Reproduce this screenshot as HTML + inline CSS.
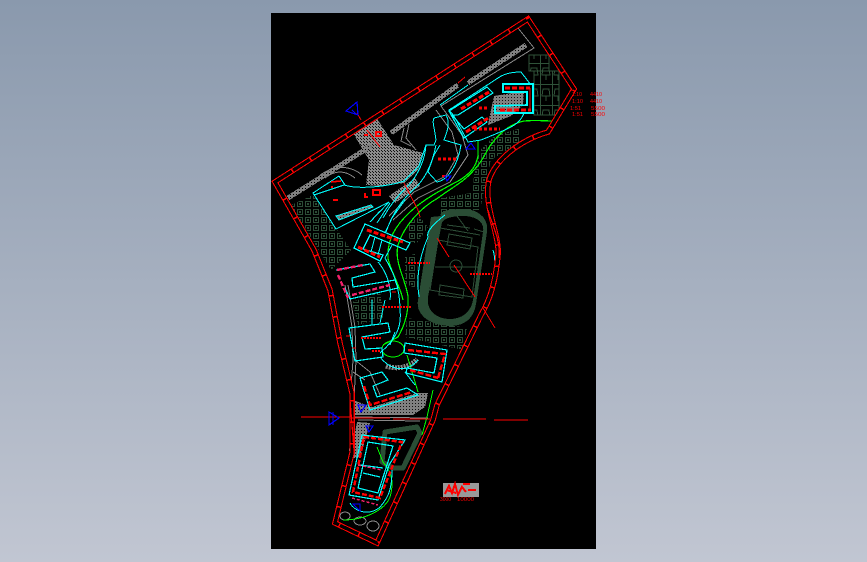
<!DOCTYPE html>
<html><head><meta charset="utf-8"><title>CAD site plan</title>
<style>
html,body{margin:0;padding:0;width:867px;height:562px;overflow:hidden;background:linear-gradient(#8a99ad,#c1c6d2)}
svg{position:absolute;left:0;top:0;display:block}
text{font-family:"Liberation Sans",sans-serif;fill:#f00;font-size:5.5px}
</style></head><body>
<svg width="867" height="562" viewBox="0 0 867 562" xmlns="http://www.w3.org/2000/svg" shape-rendering="crispEdges">
<defs>
<pattern id="g" width="3" height="3" patternUnits="userSpaceOnUse"><rect width="3" height="3" fill="#808080"/><rect x="1" y="1" width="1" height="1" fill="#111"/></pattern>
<pattern id="h" width="3" height="3" patternUnits="userSpaceOnUse"><rect width="3" height="3" fill="#8a8a8a"/><rect x="0" y="0" width="1" height="1" fill="#111"/><rect x="1" y="1" width="1" height="1" fill="#111"/></pattern>
<pattern id="s" width="3" height="3" patternUnits="userSpaceOnUse"><rect width="3" height="3" fill="#808080"/><rect x="2" y="2" width="1" height="1" fill="#000"/></pattern>
<pattern id="t" width="8" height="8" patternUnits="userSpaceOnUse"><rect width="8" height="8" fill="#000"/><rect x="1" y="1" width="6" height="1" fill="#2c4c36"/><rect x="1" y="6" width="6" height="1" fill="#2c4c36"/><rect x="1" y="2" width="1" height="4" fill="#2c4c36"/><rect x="6" y="2" width="1" height="4" fill="#2c4c36"/><rect x="3" y="3" width="2" height="2" fill="#2c4c36"/></pattern>
<pattern id="p" width="12" height="21" patternUnits="userSpaceOnUse"><rect width="12" height="21" fill="#000"/><path d="M.5 0V21M0 .5H12M3 5h6l1 7h-8zM6 12v5" fill="none" stroke="#2f5239"/></pattern>
</defs>
<rect x="271" y="13" width="325" height="536" fill="#000"/>

<!-- hatched ground -->
<g stroke="none">
<path fill="url(#g)" d="M494 96L524 91L523 105L511 116L488 125L491 110Z"/>
<path fill="url(#h)" d="M353 133L376 117L394 145L423 153L418 170L404 183L381 186L366 185L369 160Z"/>
<path fill="url(#h)" d="M389 196L415 178L420 186L395 203Z"/>
<path fill="url(#g)" d="M353 400L372 407L417 393L428 393L425 407L413 415L353 415Z"/>
<path fill="url(#g)" d="M357 422L370 423L360 458L350 458Z"/>
<path fill="url(#g)" d="M336 216L371 205L373 207L339 220Z"/>
</g>

<!-- dark green planting -->
<g stroke="#2f5239" stroke-width="1">
<path fill="url(#p)" d="M529 55H549V71H529Z"/>
<path fill="url(#p)" d="M534 71H559V115H534Z"/>
<path fill="url(#t)" stroke="none" d="M494 136L521 128L519 143L491 160L488 173L480 210L471 210L474 175L480 150Z"/>
<path fill="url(#t)" stroke="none" d="M441 198L471 193L474 213L441 213Z"/>
<path fill="url(#t)" stroke="none" d="M407 223L420 217L428 227L417 243L410 243Z"/>
<path fill="url(#t)" stroke="none" d="M405 257L417 253L418 290L405 283Z"/>
<path fill="url(#t)" stroke="none" d="M407 318L467 328L463 350L405 337Z"/>
<path fill="url(#t)" stroke="none" d="M291 205L313 195L351 250L331 270Z"/>
<path fill="url(#t)" stroke="none" d="M352 302L380 292L385 317L358 325Z"/>
</g>

<!-- running track -->
<path fill="#2a4d35" fill-rule="evenodd" d="M431 217L418 300C415 318 435 326 450 326C465 326 474 318 476 304L487 232C489 218 478 209 463 209C450 209 438 211 441 216ZM442 222L428 297C426 312 438 319 450 319C462 319 471 312 473 300L483 232C485 222 476 216 463 216C452 216 445 218 442 222Z"/>
<g fill="none" stroke="#2c4c36">
<path d="M440 228L480 235M438 240L478 247L472 297L430 290ZM449 234L472 238L470 249L447 245ZM435 267H478M440 285L464 289L463 298L439 295Z"/>
<circle cx="456" cy="266" r="6"/>
<path d="M447 225L470 228M454 212L468 231M418 308H427V315"/>
<path d="M474 229L484 232"/>
</g>
<ellipse cx="393" cy="349" rx="11" ry="8" fill="none" stroke="#0f0"/>

<!-- bottom small track -->
<path d="M385 432L417 427L420 433L403 468L393 468L382 462Z" fill="none" stroke="#2a4d35" stroke-width="5" stroke-linejoin="round"/>

<!-- grey roads -->
<path fill="none" stroke="url(#s)" stroke-width="5" d="M288 198L371 146M391 133L458 85M468 83L526 45"/>
<g fill="none" stroke="#888">
<path d="M518 28L534 48L441 106L462 135L468 155L450 182L418 198L393 220M436 110L452 132L458 155L446 176L414 192L389 216"/>
<path d="M404 128L401 141L411 146M409 124L406 138L416 150"/>
<path d="M345 285L352 327L353 360L350 400M348 285L355 327L356 360L354 400"/>
<path d="M355 360L370 372L380 395M353 372L365 380"/>
<path d="M354 417L428 418M358 420L420 421"/>
<path d="M350 451L353 420" stroke-width="2"/>
<path d="M440 395L433 420L403 480" stroke-width="1"/>
<path d="M352 395L352 412" stroke-width="1"/>
<ellipse cx="345" cy="516" rx="5" ry="4"/>
<ellipse cx="360" cy="521" rx="6" ry="4"/>
<ellipse cx="373" cy="526" rx="6" ry="5"/>
<path d="M355 178C345 170 335 170 325 178M362 175C350 165 335 165 320 175"/>
</g>
<path d="M386 366C397 370 411 367 417 359" fill="none" stroke="#888" stroke-width="5" stroke-dasharray="2 1"/>

<!-- green paths -->
<g fill="none" stroke="#0f0">
<path stroke-width="1.2" d="M556 121C545 121 535 120 524 121C510 124 500 133 493 142C486 150 484 160 474 170C464 182 451 188 438 198C420 208 404 226 398 245C394 262 405 278 408 296C409 315 403 328 398 337L383 345"/>
<path stroke-width="1.2" d="M478 141V156C476 166 472 172 460 180C445 188 425 198 410 212C395 226 387 240 388 258C390 270 400 285 403 300"/>
<path d="M433 390L427 417L422 435M377 447L383 462C390 470 395 480 390 497C385 510 365 520 343 520"/>
<path d="M418 392L407 355"/>
</g>

<!-- cyan -->
<g fill="none" stroke="#0ff">
<path stroke-width="1.6" d="M503 84H533V113H495V106L527 105V92H503Z"/>
<path stroke-width="1.2" d="M449 111L487 87L493 93L458 115L452 115L464 129L482 117L487 122L464 138Z"/>
<path d="M454 116L449 110L498 78C505 73 515 72 521 72L531 85M524 113C520 125 510 128 481 140L468 142L454 116"/>
<path d="M434 118L446 115C452 125 444 138 444 140L461 145C458 165 448 180 437 182L428 172L434 155L440 145M436 140C434 125 432 122 434 118"/>
<path d="M314 195L344 185C360 190 390 186 404 181L419 166L426 145H434L436 140M339 176L313 193L336 229L389 202M339 176L345 185M389 202L370 222M426 145C425 160 418 175 408 186C398 195 390 205 383 218M436 145C432 165 425 180 413 190C400 202 392 215 386 232"/>
<path d="M336 216L371 205L373 207L339 220Z"/>
<path stroke-width="1.2" d="M365 224L410 243L406 250L370 235L363 249L383 255L380 261L354 248Z"/>
<path d="M375 237L371 252M382 240L378 255M392 245L385 258"/>
<path stroke-width="1.2" d="M336 270L370 264L375 272L352 278L353 287L395 280L398 288L350 299L345 288"/>
<path d="M385 258C392 270 400 285 400 310C402 328 395 340 380 353M378 262C385 270 392 285 390 300M372 300V325M385 300L380 323"/>
<path stroke-width="1.2" d="M349 328L388 323L390 332L362 337L365 349L382 348L383 357L355 361Z"/>
<path stroke-width="1.2" d="M405 343L447 350L442 382L406 373L407 368L434 373L437 358L404 353Z"/>
<path stroke-width="1.2" d="M360 378L382 372L388 380L373 386L377 397L407 388L418 395L370 410Z"/>
<path d="M380 357C392 372 408 372 418 360M390 345L395 332M405 372L415 385"/>
<path stroke-width="1.2" d="M362 435L405 440L389 465L378 500L349 495ZM368 442L393 446L378 493L358 488ZM360 465L383 468M363 473L380 477"/>
<path d="M350 503C355 512 370 516 380 507C388 498 392 490 392 470"/>
<path d="M428 237C420 255 416 275 419 297M493 250C498 265 492 290 485 307M445 215C432 225 426 232 428 237"/>
<path d="M390 203L377 223M405 200L392 218L385 233M380 211L370 222"/>
<path d="M468 85L440 105"/>
</g>

<!-- red boundary (double line with cross ties) -->
<g fill="none" stroke-linejoin="miter">
<path stroke="#f00" stroke-width="5.5" d="M275 182L528 19L574 89L548 132C520 140 495 160 489 180C483 205 500 235 498 255C496 280 490 300 481 315L437 405L433 420L377 543L335 523L352 453L352 393L340 343L330 290L314 250Z"/>
<path stroke="#000" stroke-width="3.4" stroke-dasharray="20 1.5" d="M275 182L528 19L574 89L548 132C520 140 495 160 489 180C483 205 500 235 498 255C496 280 490 300 481 315L437 405L433 420L377 543L335 523L352 453L352 393L340 343L330 290L314 250Z"/>
<path stroke="#f00" stroke-width="1.2" d="M488 210C492 225 501 240 499 258M350 400L354 450"/>
</g>

<!-- red linework -->
<g fill="none" stroke="#f00">
<path stroke-width="3" stroke-dasharray="5 2" d="M505 88H530M500 110H531M461 109L489 92M466 132L490 117"/>
<path d="M530 88V110"/>
<path d="M361 120L357 113M380 147L367 130M404 183L418 210L420 217M437 238L449 257M454 265L475 297M483 308L495 328"/>
<path stroke-width="3" stroke-dasharray="5 2" d="M367 230L403 242M358 247L380 257"/>
<path stroke="#f0206a" stroke-width="2.4" stroke-dasharray="5 2" d="M337 270L363 265M338 275L348 298M352 295L390 285"/>
<path stroke-width="2.4" stroke-dasharray="6 2" d="M408 350L445 354L438 378M410 370L438 378"/>
<path stroke-width="2.4" stroke-dasharray="6 2" d="M364 386L370 405L412 392"/>
<path stroke-width="2.4" stroke-dasharray="5 2" d="M364 437L402 442L380 498L353 492Z"/>
<path stroke="#f0206a" stroke-width="1.5" stroke-dasharray="3 2" d="M358 465L382 470M352 498L378 505"/>
<path d="M301 417H350M350 418H390M393 419H430M443 419H486M494 420H528" stroke-width="1"/>
<path stroke-width="2" stroke-dasharray="2 1" d="M408 263H430M470 274H492M382 307H412M361 338H382M372 351H380"/>
<path stroke-width="3" stroke-dasharray="3 2" d="M479 108H488M474 129H500M438 159H458"/>
<path stroke-width="1.6" d="M364 135H368M376 132V136H381V132ZM365 193V197H368M373 190V195H380V190ZM442 176H446M331 182L341 181M331 187H333M333 200H338"/>
<path stroke-width="1" d="M346 336H350M352 348H356M392 292H396M465 77L458 83"/>
</g>

<!-- blue markers -->
<g fill="none" stroke="#00f" stroke-width="1.2">
<path d="M357 102L346 111L358 115ZM352 110L357 115"/>
<path d="M329 412L339 418L329 425ZM333 412V425"/>
<path d="M466 149L471 143L475 149Z"/>
<path d="M445 176H451L447 181Z"/>
<path d="M358 405H366L361 412Z"/>
<path d="M366 426H373L369 432Z"/>
<path d="M353 504H360V511Z"/>
</g>

<!-- legend -->
<rect x="443" y="483" width="36" height="14" fill="#999"/>
<path d="M445 494L449 486L452 493L455 484L458 495L462 487L466 492M463 484H470M468 490H476M446 490L456 493" fill="none" stroke="#f00" stroke-width="2"/>
<text x="440" y="501" textLength="11" lengthAdjust="spacingAndGlyphs">3000</text>
<text x="457" y="501" textLength="17" lengthAdjust="spacingAndGlyphs">10000</text>

<!-- right-hand labels -->
<text x="572" y="96" textLength="10" lengthAdjust="spacingAndGlyphs">1:10</text>
<text x="590" y="96" textLength="12" lengthAdjust="spacingAndGlyphs">4410</text>
<text x="572" y="103" textLength="11" lengthAdjust="spacingAndGlyphs">1:10</text>
<text x="590" y="103" textLength="12" lengthAdjust="spacingAndGlyphs">4410</text>
<text x="570" y="110" textLength="11" lengthAdjust="spacingAndGlyphs">1:51</text>
<text x="591" y="110" textLength="14" lengthAdjust="spacingAndGlyphs">5500</text>
<text x="572" y="116" textLength="11" lengthAdjust="spacingAndGlyphs">1:51</text>
<text x="591" y="116" textLength="14" lengthAdjust="spacingAndGlyphs">5500</text>
</svg>
</body></html>
